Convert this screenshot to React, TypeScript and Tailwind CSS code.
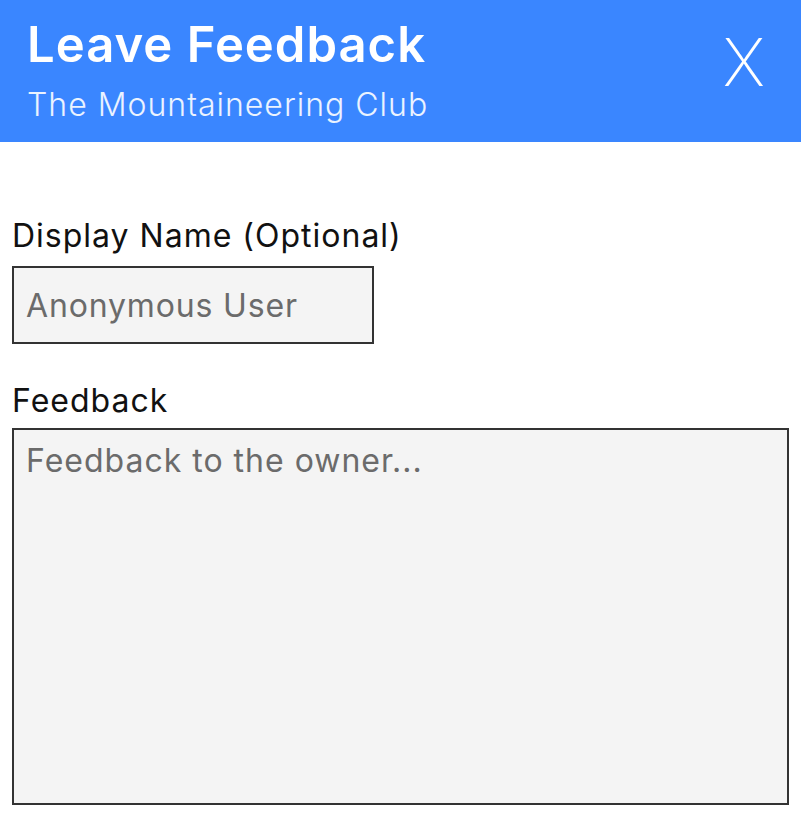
import React from "react";

export default function App() {
  return (
    <div
      className="w-[801px] h-[816px] bg-white"
      style={{ fontFamily: "Inter, 'Noto Sans', sans-serif" }}
    >
      <div className="h-[142px] bg-[#3a86ff] flex items-start justify-between pl-[27px] pr-[36px]">
        <div className="flex flex-col pt-[17px]">
          <div className="text-white text-[49px] font-semibold leading-[56px] tracking-[1px]">Leave Feedback</div>
          <div className="text-white/90 text-[32px] font-light leading-[38px] mt-[13px] tracking-[1px]">The Mountaineering Club</div>
        </div>
        <div className="text-white text-[66px] font-extralight leading-[66px] mt-[29px]">X</div>
      </div>
      <div className="px-[12px] pt-[75px] flex flex-col">
        <label className="text-[#111] text-[32px] leading-[38px] tracking-[1px]">Display Name (Optional)</label>
        <input
          className="mt-[11px] w-[362px] h-[78px] bg-[#f4f4f4] border-2 border-[#333] px-[12px] text-[32px] tracking-[0.85px] text-[#333] placeholder:text-[#6b6b6b] outline-none"
          placeholder="Anonymous User"
        />
        <label className="mt-[38px] text-[#111] text-[32px] leading-[38px] tracking-[1px]">Feedback</label>
        <textarea
          className="mt-[8px] w-[777px] h-[377px] bg-[#f4f4f4] border-2 border-[#333] px-[12px] py-[11px] text-[32px] leading-[40px] tracking-[1px] text-[#333] placeholder:text-[#6b6b6b] outline-none resize-none"
          placeholder="Feedback to the owner..."
        />
      </div>
    </div>
  );
}
